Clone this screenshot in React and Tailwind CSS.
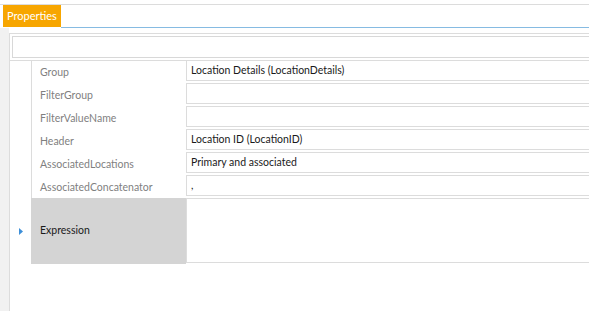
import React from "react";

const rows = [
    { label: "Group", value: "Location Details (LocationDetails)" },
    { label: "FilterGroup", value: "" },
    { label: "FilterValueName", value: "" },
    { label: "Header", value: "Location ID (LocationID)" },
    { label: "AssociatedLocations", value: "Primary and associated" },
    { label: "AssociatedConcatenator", value: "," },
];

const PropRow = ({ label, value, first }) => (
    <div className="flex h-[23px]">
        <div className={`flex w-[176px] shrink-0 ${first ? "border-t border-[#dcdcdc]" : ""}`}>
            <div className="w-[22px] shrink-0 border-r border-[#dcdcdc]"></div>
            <div className="flex items-center pl-[8px] pt-[2px] text-[#7f7f7f]">{label}</div>
        </div>
        <div className="flex-1">
            <div className="flex h-[21px] items-center border border-[#dcdcdc] pl-[4px] pt-[1px] text-[#1a1a1a]">{value}</div>
        </div>
    </div>
);

export default function App() {
    return (
        <div className="h-[311px] w-[589px] overflow-hidden bg-white text-[10.5px] font-['Lato','Liberation_Sans',sans-serif]">
            <div className="flex h-full w-[600px] flex-col">
                <div className="mt-[4px] border-t border-[#dcdcdc]">
                    <div className="flex h-[23px]">
                        <div className="ml-[3px] flex h-[22px] items-center bg-[#f7a600] px-[4px] text-[11px] text-white">
                            Properties
                        </div>
                        <div className="flex-1 border-b border-[#86bbe2]"></div>
                    </div>
                </div>
                <div className="flex flex-1">
                    <div className="w-[9px] shrink-0 bg-[#f1f1f1]"></div>
                    <div className="mt-[5px] flex flex-1 flex-col border-l border-t border-[#dcdcdc]">
                        <div className="ml-[2px] mt-[2px] h-[22px] border border-[#d8d8d8]"></div>
                        <div className="mt-[2px] flex flex-col">
                            {rows.map((r, i) => (
                                <PropRow key={r.label} label={r.label} value={r.value} first={i === 0} />
                            ))}
                            <div className="flex h-[66px]">
                                <div className="flex w-[176px] shrink-0">
                                    <div className="flex w-[21px] shrink-0 items-center justify-center pt-[1px]">
                                        <svg width="4" height="7" viewBox="0 0 4 7">
                                            <path d="M0 0 L4 3.5 L0 7 Z" fill="#3d8fd8" />
                                        </svg>
                                    </div>
                                    <div className="flex flex-1 items-center bg-[#d4d4d4] pl-[9px] text-[#1a1a1a]">Expression</div>
                                </div>
                                <div className="flex-1">
                                    <div className="h-[65px] border border-[#dcdcdc]"></div>
                                </div>
                            </div>
                        </div>
                    </div>
                </div>
            </div>
        </div>
    );
}
